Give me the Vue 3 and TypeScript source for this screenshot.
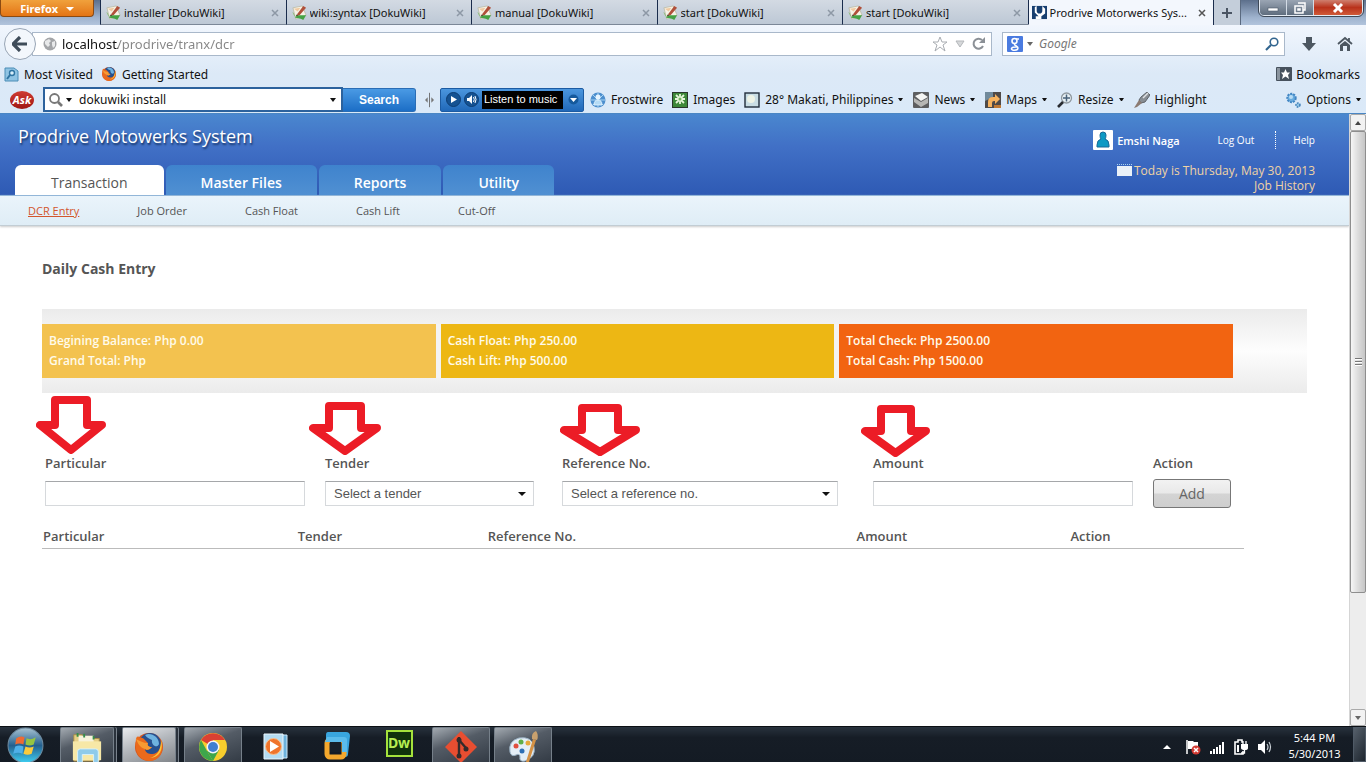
<script setup lang="ts">
import { ref } from 'vue'

interface Field {
  id: string
  label: string
  kind: 'text' | 'select' | 'button'
  hint?: string
  arrow?: { w: number; h: number; left: number; right: number; wing: number; cls: string }
}

const browserTabs = ['installer [DokuWiki]', 'wiki:syntax [DokuWiki]', 'manual [DokuWiki]', 'start [DokuWiki]', 'start [DokuWiki]']
const address = ref('localhost/prodrive/tranx/dcr')
const askQuery = ref('dokuwiki install')
const googleQuery = ref('')

const mainTabs = ['Transaction', 'Master Files', 'Reports', 'Utility']
const subTabs = ['DCR Entry', 'Job Order', 'Cash Float', 'Cash Lift', 'Cut-Off']

const cards = [
  { cls: 'light', lines: ['Begining Balance: Php 0.00', 'Grand Total: Php'] },
  { cls: 'gold', lines: ['Cash Float: Php 250.00', 'Cash Lift: Php 500.00'] },
  { cls: 'orange', lines: ['Total Check: Php 2500.00', 'Total Cash: Php 1500.00'] },
]

const fields: Field[] = [
  { id: 'particular', label: 'Particular', kind: 'text', arrow: { w: 70, h: 58, left: 19, right: 51, wing: 29, cls: 'a1' } },
  { id: 'tender', label: 'Tender', kind: 'select', hint: 'Select a tender', arrow: { w: 72, h: 53, left: 20, right: 52, wing: 26, cls: 'a2' } },
  { id: 'reference', label: 'Reference No.', kind: 'select', hint: 'Select a reference no.', arrow: { w: 80, h: 52, left: 22, right: 58, wing: 26, cls: 'a3' } },
  { id: 'amount', label: 'Amount', kind: 'text', arrow: { w: 69, h: 52, left: 20, right: 50, wing: 26, cls: 'a4' } },
  { id: 'action', label: 'Action', kind: 'button' },
]

const columns = ['Particular', 'Tender', 'Reference No.', 'Amount', 'Action']

function arrowPath(a: NonNullable<Field['arrow']>): string {
  return `M${a.left} 4H${a.right}V${a.wing}H${a.w - 4}L${a.w / 2} ${a.h - 4}L4 ${a.wing}H${a.left}Z`
}
</script>

<template>
  <div class="desktop">
    <svg class="defs" aria-hidden="true">
      <defs>
        <symbol id="doku" viewBox="0 0 16 16">
          <path d="M1 3L11 1L15 11L4 15Z" fill="#f6f3e6" stroke="#b9b7a2" stroke-width=".8" />
          <path d="M2 4L9 3L6 7Z" fill="#f0c9a0" />
          <path d="M6 9L12 1L15 3L8 11L5 12Z" fill="#b0503a" />
          <path d="M5 10L7 11L4 12Z" fill="#3b2b22" />
          <path d="M3 13C6 10 9 11 15 11L12 16C8 13 6 15 3 13Z" fill="#45a244" />
          <path d="M1 8L3 12" stroke="#8fbf7c" />
        </symbol>
        <symbol id="fox" viewBox="0 0 32 32">
          <circle cx="16" cy="16" r="14" fill="#d8561b" />
          <circle cx="17" cy="13" r="11" fill="#27508f" />
          <path d="M12 4C18 1 26 6 26 13C24 18 18 14 19 9C17 8 14 7 12 4Z" fill="#6fb3e0" />
          <path d="M3 8C1 19 5 29 16 30C27 30 32 19 28 9C29 18 24 24 18 23C14 23 12 20 12 18C15 20 17 18 19 16C15 16 14 14 15 12C12 10 11 6 7 7C5 5 4 5 3 8Z" fill="#ea6a1c" />
          <path d="M28 9C31 18 26 27 17 27C25 25 28 18 28 9Z" fill="#fbc53a" />
          <path d="M3 8C5 12 6 16 12 18C15 20 17 18 19 16C15 16 14 14 15 12C10 12 7 10 3 8Z" fill="#f79a32" />
        </symbol>
        <linearGradient id="orb" x1="0" y1="0" x2="0" y2="1">
          <stop offset="0" stop-color="#a9c3d2" />
          <stop offset=".5" stop-color="#24608f" />
          <stop offset="1" stop-color="#3ed0f3" />
        </linearGradient>
      </defs>
    </svg>

    <header class="strip">
      <button class="ff-button" type="button">Firefox <span class="tri white"></span></button>
      <nav class="btabs" aria-label="Open tabs">
        <div v-for="(t, i) in browserTabs" :key="i" class="btab">
          <svg class="fav"><use href="#doku" /></svg>
          <span class="btitle">{{ t }}</span>
          <button class="x" type="button" aria-label="Close tab"><svg viewBox="0 0 8 8"><path d="M1 1L7 7M7 1L1 7" /></svg></button>
        </div>
        <div class="btab active">
          <svg class="fav" viewBox="0 0 16 16"><rect y="1" width="16" height="14" fill="#173f70" /><path d="M3 2L5 1V6Q5 9 8 9Q11 9 11 6V1L14 4V9L10 12V15H4V12L7 12L3 8Z" fill="#fff" /></svg>
          <span class="btitle">Prodrive Motorwerks Sys...</span>
          <button class="x" type="button" aria-label="Close tab"><svg viewBox="0 0 8 8"><path d="M1 1L7 7M7 1L1 7" /></svg></button>
        </div>
        <button class="plus" type="button" aria-label="New tab"><svg viewBox="0 0 12 12"><path d="M6 1V11M1 6H11" /></svg></button>
      </nav>
      <div class="winbtns">
        <button type="button" aria-label="Minimize"><svg viewBox="0 0 14 12"><rect x="2" y="6" width="10" height="3" fill="#fff" stroke="#4a5768" stroke-width=".6" /></svg></button>
        <button type="button" aria-label="Restore"><svg viewBox="0 0 14 12"><path d="M5 1H12V8H10M2 4H10V11H2ZM5 7H7V8H5Z" fill="none" stroke="#fff" stroke-width="1.5" /></svg></button>
        <button class="close" type="button" aria-label="Close"><svg viewBox="0 0 14 12"><path d="M3 2L11 10M11 2L3 10" stroke="#fff" stroke-width="3" /></svg></button>
      </div>
    </header>

    <section class="chrome">
      <div class="navrow">
        <button class="back" type="button" aria-label="Back"><svg viewBox="0 0 16 16"><path d="M8 1L1 8L8 15M2 8H15" fill="none" stroke="#3f4c59" stroke-width="3.2" /></svg></button>
        <div class="urlbox">
          <svg class="i14" viewBox="0 0 14 14"><circle cx="7" cy="7" r="6.5" fill="#a3a5a8" /><path d="M2 4L6 2L8 4L6 6L7 8L5 10L2 7ZM9 5L12 4L12 9L10 11L9 8Z" fill="#e8e9ea" /></svg>
          <input v-model="address" class="address" aria-label="Address" />
          <svg class="i16" viewBox="0 0 16 16"><path d="M8 1L10 6L15 6L11 9L13 15L8 11L3 15L5 9L1 6L6 6Z" fill="#fff" stroke="#a9adb2" /></svg>
          <svg class="i10" viewBox="0 0 10 10"><path d="M1 2H9L5 8Z" fill="#d6d8da" stroke="#b4b7ba" /></svg>
          <svg class="i14" viewBox="0 0 14 14"><path d="M11 9A5 5 0 1 1 10 3" fill="none" stroke="#8b9096" stroke-width="2" /><path d="M7 6H13V0Z" fill="#8b9096" /></svg>
        </div>
        <div class="googlebox">
          <svg class="i16" viewBox="0 0 16 16"><rect width="16" height="16" rx="1" fill="#4a7be0" /><circle cx="7.500" cy="5" r="2.500" fill="none" stroke="#fff" stroke-width="1.600" /><path d="M9 3H12M8 8C6 9 11 10 11 12C11 15 4 15 4.500 12.500C5 10.500 9 11 10 11" fill="none" stroke="#fff" stroke-width="1.500" /></svg>
          <span class="tri gray"></span>
          <input v-model="googleQuery" class="ginput" placeholder="Google" aria-label="Search with Google" />
          <svg class="i14" viewBox="0 0 14 14"><circle cx="9" cy="5" r="3.800" fill="none" stroke="#32658f" stroke-width="1.600" /><path d="M6 8L1 13" stroke="#32658f" stroke-width="2.200" /></svg>
        </div>
        <button class="flat" type="button" aria-label="Downloads"><svg viewBox="0 0 16 16"><path d="M5 1H11V7H15L8 15L1 7H5Z" fill="#4d5761" /></svg></button>
        <button class="flat" type="button" aria-label="Home"><svg viewBox="0 0 16 16"><path d="M1 8L8 2L15 8M12 5V2" fill="none" stroke="#4d5761" stroke-width="1.800" /><path d="M3 9L8 5L13 9V15H10V10H6V15H3Z" fill="#4d5761" /></svg></button>
      </div>

      <div class="marks">
        <a href="#"><svg class="i15" viewBox="0 0 15 15"><path d="M1 1H10L14 4V14H1Z" fill="#8fc3e3" stroke="#4b8db6" /><circle cx="8" cy="6" r="2.500" fill="#d9effa" stroke="#2f74a2" stroke-width="1.400" /><path d="M6 8L3 12" stroke="#2f74a2" stroke-width="2" /></svg>Most Visited</a>
        <a href="#"><svg class="i16"><use href="#fox" /></svg>Getting Started</a>
        <a href="#" class="right"><svg class="i16" viewBox="0 0 16 16"><rect y="1" width="16" height="14" rx="1" fill="#46515d" /><rect x="1" y="2" width="3" height="12" fill="#8a949e" /><path d="M9.500 3L11 6.500H14L12 9L13 13L9.500 10.500L6 13L7 9L5 6.500H8Z" fill="#fff" /></svg>Bookmarks</a>
      </div>

      <div class="ask">
        <div class="asklogo">Ask</div>
        <div class="askbox">
          <svg class="i16" viewBox="0 0 16 16"><circle cx="6.500" cy="6.500" r="4.500" fill="#fff" stroke="#777" stroke-width="1.800" /><path d="M10 10L14 14" stroke="#777" stroke-width="2.600" /></svg>
          <span class="tri"></span>
          <input v-model="askQuery" aria-label="Ask search" />
          <span class="tri"></span>
        </div>
        <button class="search" type="button">Search</button>
        <svg class="split" viewBox="0 0 10 16"><path d="M5 0V16" stroke="#666" /><path d="M0 8L3 5V11ZM10 8L7 5V11Z" fill="#777" /></svg>
        <div class="player">
          <button type="button" aria-label="Play"><svg viewBox="0 0 15 15"><circle cx="7.500" cy="7.500" r="7" fill="#155292" stroke="#0d3d73" /><path d="M5 4V11L11 7.500Z" fill="#fff" /></svg></button>
          <button type="button" aria-label="Volume"><svg viewBox="0 0 15 15"><circle cx="7.500" cy="7.500" r="7" fill="#155292" stroke="#0d3d73" /><path d="M3 6H5L8 3V12L5 9H3Z" fill="#fff" /><path d="M9.500 5Q11 7.500 9.500 10M11 4Q13 7.500 11 11" stroke="#fff" fill="none" /></svg></button>
          <span class="screen">Listen to music</span>
          <button type="button" aria-label="Player menu"><svg viewBox="0 0 15 15"><circle cx="7.500" cy="7.500" r="5" fill="#15599c" /><path d="M4 6H11L7.500 10Z" fill="#fff" /></svg></button>
        </div>
        <div class="tools">
          <a href="#"><svg class="i16" viewBox="0 0 16 16"><circle cx="8" cy="8" r="7.500" fill="#4d8fce" /><path d="M8 1V15M1 8H15M3 3L13 13M13 3L3 13" stroke="#a8d4f2" /><circle cx="8" cy="5" r="2.500" fill="#e7f5ff" /><path d="M4 13Q4 8 8 8Q12 8 12 13Z" fill="#b5dbf5" stroke="#e7f5ff" stroke-width=".8" /></svg>Frostwire</a>
          <a href="#"><svg class="i16" viewBox="0 0 16 16"><rect x=".5" y=".5" width="15" height="15" fill="#3d8838" stroke="#29372a" /><path d="M8 2V12M3 7H13M4 3L12 11M12 3L4 11" stroke="#e6f5d9" stroke-width="1.800" /><circle cx="8" cy="7" r="1.500" fill="#74b65e" /></svg>Images</a>
          <a href="#"><svg class="i16" viewBox="0 0 16 16"><rect x="1" y="1" width="14" height="14" fill="#c9dde4" stroke="#222d3b" stroke-width="1.400" /><circle cx="7" cy="7" r="4" fill="#eef3e6" /></svg>28° Makati, Philippines<span class="tri small"></span></a>
          <a href="#"><svg class="i16" viewBox="0 0 16 16"><rect width="16" height="16" rx="1" fill="#5d5e60" /><path d="M2 4L9 1L15 5L8 9Z" fill="#f5f5f3" /><path d="M1 6L8 10L15 6V11L8 15L1 10Z" fill="#b6b6b4" /></svg>News<span class="tri small"></span></a>
          <a href="#"><svg class="i16" viewBox="0 0 16 16"><rect width="16" height="16" fill="#4f4a48" /><path d="M0 0H8V5L0 9Z" fill="#718a9b" /><path d="M3 15V10Q3 5 8 5H10V2L15 7L10 12V9H9Q7 9 7 11V15Z" fill="#f6b25e" /><path d="M9 13H16V16H9Z" fill="#c07a35" /></svg>Maps<span class="tri small"></span></a>
          <a href="#"><svg class="i16" viewBox="0 0 16 16"><circle cx="9.500" cy="6" r="5" fill="#e7f0f5" stroke="#8f989f" stroke-width="1.300" /><path d="M9.500 2.500V9.500M6 6H13" stroke="#49627a" stroke-width="1.500" /><path d="M6 10L1 15" stroke="#282b30" stroke-width="2.600" /></svg>Resize<span class="tri small"></span></a>
          <a href="#"><svg class="i16" viewBox="0 0 16 16"><path d="M7 5L13 0L16 3L11 10L7 11L5 8Z" fill="#888e94" stroke="#5f6469" /><path d="M9 6L14 1" stroke="#dfe2e4" stroke-width="1.500" /><path d="M5 8L8 11L3 15L0 16Z" fill="#8c7b72" /></svg>Highlight</a>
        </div>
        <a href="#" class="options"><svg class="i16" viewBox="0 0 16 16"><circle cx="6.500" cy="6" r="4.200" fill="#69acdf" stroke="#4386c3" stroke-width="2" stroke-dasharray="2 1" /><circle cx="6" cy="5" r="2" fill="#b9dcf4" /><circle cx="13" cy="13" r="2" fill="#8dc1e4" stroke="#3c7fb8" stroke-width="1.500" stroke-dasharray="1.500 1" /></svg>Options<span class="tri small"></span></a>
      </div>
    </section>

    <div class="viewport">
      <div class="page">
        <header class="apphead">
          <div class="headtop">
            <h1>Prodrive Motowerks System</h1>
            <div class="user">
              <div class="userrow">
                <svg class="avatar" viewBox="0 0 20 20"><rect width="20" height="20" rx="1" fill="#fff" /><path d="M7 5Q7 2 10 2Q13 2 13 5Q13 8 12 9Q16 10 16 15V17H4V15Q4 10 8 9Q7 8 7 5Z" fill="#0d9ac4" stroke="#176a98" /></svg>
                <span class="name">Emshi Naga</span>
                <a href="#" class="logout">Log Out</a>
                <a href="#" class="help">Help</a>
              </div>
              <div class="today"><svg class="cal" viewBox="0 0 16 14"><rect y="3" width="15" height="10" fill="#eaf1f8" /><path d="M0 1.500H15" stroke="#a9d3ee" stroke-dasharray="1 1" /></svg>Today is Thursday, May 30, 2013</div>
              <div class="today"><a href="#">Job History</a></div>
            </div>
          </div>
          <nav class="maintabs" aria-label="Modules">
            <a v-for="(t, i) in mainTabs" :key="t" href="#" :class="{ on: i === 0 }">{{ t }}</a>
          </nav>
        </header>
        <nav class="subnav" aria-label="Transaction">
          <a v-for="(t, i) in subTabs" :key="t" href="#" :class="{ on: i === 0 }">{{ t }}</a>
        </nav>

        <main>
          <h2>Daily Cash Entry</h2>
          <section class="summary">
            <div class="cards">
              <div v-for="c in cards" :key="c.cls" class="card" :class="c.cls">
                <div v-for="l in c.lines" :key="l">{{ l }}</div>
              </div>
            </div>
          </section>

          <form class="entry" @submit.prevent>
            <div v-for="f in fields" :key="f.id" class="field" :class="f.id">
              <label :for="f.id">{{ f.label }}</label>
              <input v-if="f.kind === 'text'" :id="f.id" type="text" />
              <div v-else-if="f.kind === 'select'" class="selectwrap">
                <select :id="f.id"><option>{{ f.hint }}</option></select>
                <span class="tri"></span>
              </div>
              <button v-else :id="f.id" type="submit">Add</button>
              <svg v-if="f.arrow" class="arrow" :class="f.arrow.cls" :width="f.arrow.w" :height="f.arrow.h" aria-hidden="true"><path :d="arrowPath(f.arrow)" /></svg>
            </div>
          </form>

          <table class="entries">
            <thead><tr><th v-for="c in columns" :key="c" :class="c.slice(0, 3).toLowerCase()" scope="col">{{ c }}</th></tr></thead>
          </table>
        </main>
      </div>
      <div class="scroll" aria-hidden="true">
        <div class="sbtn"><span class="tri up"></span></div>
        <div class="track"><div class="thumb"><i></i><i></i><i></i></div></div>
        <div class="sbtn"><span class="tri gray"></span></div>
      </div>
    </div>

    <footer class="taskbar">
      <button class="start" type="button" aria-label="Start"><svg viewBox="0 0 36 36"><circle cx="18" cy="18" r="17" fill="url(#orb)" stroke="#6e8ba0" /><path d="M9 11Q13 8 17 10L16 17Q12 15 8 17Z" fill="#ee6a33" /><path d="M19 11Q23 13 28 10L26 17Q22 19 18 17Z" fill="#96c542" /><path d="M8 19Q12 17 16 19L15 26Q11 24 6 26Z" fill="#4fb0e8" /><path d="M18 19Q22 21 26 19L24 26Q20 28 16 26Z" fill="#fbca3c" /></svg></button>
      <button class="task open stack" type="button" aria-label="Explorer"><svg viewBox="0 0 34 34"><path d="M3 4H12V8H30V32H3Z" fill="#e6cf86" stroke="#a98c43" /><path d="M8 5H24V12H8Z" fill="#f7f3dc" /><path d="M2 11H32V31H2Z" fill="#f7e8a7" /><path d="M7 2V6M14 3V7M24 5V9" stroke="#358d49" stroke-width="2" /><path d="M7 34V22Q7 19 10 19H26Q29 19 29 22V34H24V25H12V34Z" fill="#8fcbea" stroke="#d8f1fb" /></svg></button>
      <button class="task open current stack" type="button" aria-label="Firefox"><svg><use href="#fox" /></svg></button>
      <button class="task open" type="button" aria-label="Chrome"><svg viewBox="0 0 32 32"><circle cx="16" cy="16" r="14" fill="#f7cd2d" /><path d="M16 16L4 9A14 14 0 0 1 28 9H16Z" fill="#db4033" /><path d="M4 9L10 20L16 30A14 14 0 0 1 4 9Z" fill="#3ea64b" /><path d="M10 20L16 30L22 19Z" fill="#3ea64b" /><circle cx="16" cy="16" r="6.500" fill="#f4f5f5" /><circle cx="16" cy="16" r="5" fill="#3f7fd1" /></svg></button>
      <button class="task" type="button" aria-label="Media Player"><svg viewBox="0 0 32 32"><path d="M8 5H28V28H8Z" fill="#6eb2dc" stroke="#d1eafa" /><path d="M5 4H24V29H5Z" fill="#b5dcf2" stroke="#eaf6fd" /><circle cx="14.500" cy="16.500" r="8" fill="#f0742b" stroke="#fac28e" /><path d="M11 11V22L20 16.500Z" fill="#fff" /></svg></button>
      <button class="task" type="button" aria-label="VMware"><svg viewBox="0 0 32 32"><path d="M7 2H25Q29 2 29 6L27 24Q27 27 24 27H21V9H5V5Q5 2 7 2Z" fill="#39a6df" /><rect x="6" y="10" width="17" height="17" rx="3" fill="none" stroke="#f4a82d" stroke-width="5" /><path d="M6 7H23Q26 7 26 10V22H21V12H4Z" fill="#5bbcec" /><rect x="9" y="12" width="11" height="10" fill="#17202a" /></svg></button>
      <button class="task" type="button" aria-label="Dreamweaver"><span class="dw">Dw</span></button>
      <button class="task open" type="button" aria-label="Git"><svg viewBox="0 0 32 32"><path d="M16 0L32 16L16 32L0 16Z" fill="#e84e31" /><path d="M14 6V25M14 9L21 17" stroke="#352b2b" stroke-width="2.400" /><circle cx="14" cy="9" r="2.500" fill="#352b2b" /><circle cx="14" cy="25" r="2.500" fill="#352b2b" /><circle cx="21" cy="18" r="2.500" fill="#352b2b" /></svg></button>
      <button class="task open" type="button" aria-label="Paint"><svg viewBox="0 0 32 32"><path d="M3 21Q1 10 12 7Q25 5 27 16Q29 26 18 30Q12 31 13 26Q13 22 9 24Q4 26 3 21Z" fill="#e4eef6" stroke="#9cb4c7" /><circle cx="9" cy="15" r="2.500" fill="#e1503f" /><circle cx="14" cy="11" r="2.500" fill="#5fae47" /><circle cx="21" cy="12" r="2.500" fill="#e7a83a" /><circle cx="15" cy="20" r="2.500" fill="#2e6fb4" /><path d="M19 31L26 8L29 9L22 31Z" fill="#d49246" /><path d="M25 8Q24 2 29 0Q32 4 30 9Z" fill="#c9a16e" /></svg></button>
      <div class="tray">
        <span class="tri up white"></span>
        <svg class="i16" viewBox="0 0 16 16"><path d="M2 1V15" stroke="#fff" stroke-width="1.500" /><path d="M3 2H8L9 3H13V10H3Z" fill="#fff" /><circle cx="11" cy="11" r="4.500" fill="#d33b33" /><path d="M9 9L13 13M13 9L9 13" stroke="#fff" stroke-width="1.500" /></svg>
        <svg class="i16" viewBox="0 0 16 16"><path d="M2 15V12M5 15V10M8 15V8M11 15V6M14 15V3" stroke="#fff" stroke-width="2" /></svg>
        <svg class="i16" viewBox="0 0 16 16"><path d="M3 3H5V1H9V3H10M3 3H2V15H10V12" fill="none" stroke="#fff" stroke-width="1.600" /><path d="M8 5H15V9Q15 11 12 11Q8 11 8 9Z" fill="#fff" /><path d="M10 2V5M13 2V5M11.500 11V14H8" stroke="#fff" stroke-width="1.300" fill="none" /><path d="M4 6H6V13H4Z" fill="#fff" /></svg>
        <svg class="i16" viewBox="0 0 16 16"><path d="M1 5H4L8 1V15L4 11H1Z" fill="#fff" /><path d="M10 5Q12 8 10 11M12 3Q15 8 12 13" fill="none" stroke="#c9d0d6" stroke-width="1.200" /></svg>
      </div>
      <time class="clock"><span>5:44 PM</span><span>5/30/2013</span></time>
      <button class="peek" type="button" aria-label="Show desktop"></button>
    </footer>
  </div>
</template>

<style>
html, body { margin: 0; }
</style>

<style scoped>
.desktop {
  display: flex;
  flex-direction: column;
  height: 100vh;
  overflow: hidden;
  font-family: "Noto Sans", "Open Sans", sans-serif;
  font-size: 12px;
  color: #111;
  background: #fff;
}
.desktop * { box-sizing: border-box; }
.defs { position: absolute; width: 0; height: 0; }
a { color: inherit; text-decoration: none; }
button { font: inherit; color: inherit; padding: 0; border: 0; background: none; }
input { font: inherit; color: inherit; border: 0; padding: 0; margin: 0; background: none; outline: 0; min-width: 0; }
svg { display: block; flex: none; }
.i10 { width: 10px; height: 10px; }
.i14 { width: 14px; height: 14px; }
.i15 { width: 15px; height: 15px; }
.i16 { width: 16px; height: 16px; }
.tri { flex: none; display: inline-block; width: 0; height: 0; border: 3px solid transparent; border-top: 4px solid #111; border-bottom: 0; }
.tri.small { border-width: 3px 2px 0; width: 5px; }
.tri.white { border-top-color: #fff; }
.tri.gray { border-top-color: #666; }
.tri.up { border-top: 0; border-bottom: 4px solid #444; }
.tri.up.white { border-bottom-color: #fff; }

/* tab strip */
.strip { display: flex; flex: none; height: 25px; background: linear-gradient(#5c6f8b, #9fb3ce 70%, #b2c4dc); }
.ff-button {
  width: 94px; height: 17px; margin-right: 6px; border: 1px solid #8b4a12; border-top: 0; border-radius: 0 0 4px 4px;
  background: linear-gradient(#f0a13c, #e37415); color: #fff; font-size: 11px; font-weight: 700; line-height: 15px;
}
.ff-button .tri { border-width: 4px 4px 0; margin: 0 0 2px 5px; }
.btabs { display: flex; flex: 1; min-width: 0; }
.btab {
  display: flex; align-items: center; flex: 0 1 186px; min-width: 0; padding: 1px 7px 0 5px; font-size: 11px;
  background: linear-gradient(#d3dae3, #bdc8d5); border-left: 1px solid #1a2c4c; border-bottom: 1px solid #7b8797;
}
.btab.active { background: #f3f7fd; border-bottom-color: #f3f7fd; padding-left: 3px; }
.fav { width: 15px; height: 15px; margin-right: 3px; }
.btitle { flex: 1; white-space: nowrap; overflow: hidden; }
.x svg { width: 8px; height: 8px; }
.x path { stroke: #8d98a5; stroke-width: 1.500; }
.active .x path { stroke: #555; }
.plus { display: grid; flex: none; place-items: center; width: 28px; background: #c4ceda; border-left: 1px solid #1a2c4c; border-right: 1px solid #5a6a80; }
.plus svg { width: 12px; height: 12px; }
.plus path { stroke: #4a5563; stroke-width: 2; }
.winbtns { display: flex; width: 104px; height: 16px; margin: 0 3px 0 18px; border: 1px solid #e4ebf3; border-top: 0; border-radius: 0 0 5px 5px; overflow: hidden; outline: 1px solid #3f4a58; }
.winbtns button { display: grid; place-items: center; flex: 0 0 27px; background: linear-gradient(#9aa5b3, #5f6d7e); border-right: 1px solid #d4dce6; }
.winbtns .close { flex: 1; border: 0; background: linear-gradient(#cf7f6e, #b9321b 50%, #d05a38); }
.winbtns svg { width: 14px; height: 12px; }

/* browser toolbars */
.chrome { flex: none; background: linear-gradient(#f1f6fd, #dce9f7 55%, #dae9f8); border-bottom: 1px solid #4a86c4; }
.navrow { display: flex; align-items: center; height: 37px; padding: 0 13px 0 4px; }
.back { display: grid; place-items: center; width: 32px; height: 32px; border-radius: 50%; background: #f3f7fc; border: 1px solid #98a5b5; z-index: 1; }
.back svg { width: 16px; height: 16px; }
.urlbox, .googlebox { display: flex; align-items: center; height: 24px; background: #fff; border: 1px solid #a9b8ca; }
.urlbox { flex: 1; margin-left: -4px; padding: 0 5px 0 10px; gap: 7px; }
.address { flex: 1; font-size: 13px; line-height: 20px; margin-left: -2px; color: transparent; background: linear-gradient(90deg, #111 56px, #858585 56px); -webkit-background-clip: text; background-clip: text; }
.googlebox { flex: 0 0 283px; margin: 0 16px 0 10px; padding: 0 5px 0 4px; gap: 4px; }
.ginput { flex: 1; font-style: italic; margin-left: 2px; }
.ginput::placeholder { color: #777; opacity: 1; }
.flat svg { width: 16px; height: 16px; }
.flat + .flat { margin-left: 20px; }
.marks { display: flex; align-items: center; gap: 8px; height: 24px; padding: 0 6px 0 4px; }
.marks a, .tools a, .options { display: flex; align-items: center; gap: 5px; white-space: nowrap; }
.marks .right { margin-left: auto; gap: 4px; }
.ask { display: flex; align-items: center; height: 27px; padding: 0 5px 0 10px; }
.asklogo { width: 24px; height: 18px; border-radius: 50%; background: linear-gradient(#cf3b32, #a01713); color: #fff; font-weight: 700; font-style: italic; font-size: 11px; line-height: 17px; text-align: center; }
.askbox { display: flex; align-items: center; flex: 0 0 300px; height: 25px; margin-left: 9px; padding: 0 5px 0 3px; border: 2px solid #2c629d; background: #fff; }
.askbox input { flex: 1; margin-left: 7px; }
.askbox svg { margin-right: 2px; }
.search { width: 73px; height: 24px; background: linear-gradient(#4a9ae4, #1c6ec6); border: 1px solid #2a6db5; border-left: 0; border-radius: 0 3px 3px 0; color: #fff; font: 700 12px "Liberation Sans", sans-serif; }
.split { width: 9px; height: 16px; margin: 0 6px 0 9px; }
.player { display: flex; align-items: center; gap: 3px; height: 24px; padding: 0 2px 0 5px; border-radius: 2px; border: 1px solid #1c5ba2; background: linear-gradient(#4b96de, #2068b8); }
.player svg { width: 15px; height: 15px; }
.screen { width: 81px; height: 18px; padding-left: 2px; line-height: 17px; background: #000; color: #fff; font-family: "Liberation Sans", sans-serif; font-size: 11px; white-space: nowrap; }
.tools { display: flex; gap: 9px; margin-left: 6px; }
.tools a:nth-child(n + 3) { margin-right: 1px; }
.options { margin-left: auto; }

/* web page */
.viewport { display: flex; flex: 1; min-height: 0; }
.page { flex: 1; min-width: 0; overflow: hidden; color: #555; font-family: "Open Sans", "Noto Sans", sans-serif; }
.apphead { display: flex; flex-direction: column; justify-content: space-between; height: 81px; background: linear-gradient(#4a87cf, #4170c6 40%, #2e5ab4); color: #fff; }
.headtop { display: flex; justify-content: space-between; height: 0; padding: 0 34px 0 18px; }
h1 { margin: 9px 0 0; font-size: 18px; line-height: 26px; font-weight: 500; text-shadow: 1px 2px 2px #173568; white-space: nowrap; }
.user { padding-top: 15px; }
.userrow { display: flex; align-items: center; justify-content: flex-end; height: 22px; font-size: 10px; font-weight: 500; }
.avatar { width: 20px; height: 20px; margin-right: 4px; }
.name { font-size: 11px; font-weight: 600; margin-right: 38px; }
.logout { padding-right: 21px; line-height: 18px; border-right: 1px dotted #fff; margin-right: 17px; }
.today { display: flex; justify-content: flex-end; font-size: 12px; line-height: 15px; color: #f0d3a4; }
.user .userrow + .today { margin-top: 12px; }
.cal { width: 16px; height: 14px; margin-right: 1px; }
.maintabs { display: flex; gap: 2px; padding-left: 15px; }
.maintabs a { padding: 6px 35px 0; height: 30px; line-height: 24px; font-size: 14px; font-weight: 600; border-radius: 6px 6px 0 0; background: linear-gradient(#3f83cd, #5090d2); }
.maintabs a.on { padding: 6px 36px 0; background: #fff; color: #555; font-weight: 500; }
.subnav { display: flex; align-items: center; gap: 58px; height: 31px; padding-left: 28px; font-size: 11px; font-weight: 500; background: linear-gradient(#eaf4fb, #dfedf6); border-top: 1px solid #92b6d8; border-bottom: 1px solid #c2cdd4; box-shadow: 0 1px 2px #ccc; }
.subnav .on { color: #d3562d; text-decoration: underline; }
main { padding: 32px 42px 0; }
h2 { margin: 0; font-size: 14px; line-height: 22px; font-weight: 700; }
.summary { margin-top: 29px; padding: 15px 0; background: linear-gradient(#ebebeb, #fdfdfd 50%, #ebebeb); }
.cards { display: flex; gap: 5px; width: 94.15%; background: #f3f3f3; }
.card { flex: 1; padding: 7px; line-height: 20px; font-weight: 600; color: #fffbea; }
.light { background: #f3c24f; }
.gold { background: #edb714; }
.orange { background: #f26411; }
.entry { display: grid; grid-template-columns: 280fr 237fr 311fr 280fr 78fr; width: 93.75%; margin: 60px 0 0 3px; }
.field { position: relative; }
.field label { display: block; height: 28px; line-height: 20px; font-size: 13px; font-weight: 600; }
.particular, .amount { padding-right: 20px; }
.tender { padding-right: 28px; }
.reference { padding-right: 35px; }
.field input, .field select { display: block; width: 100%; height: 25px; border: 1px solid #d6d9dc; border-top-color: #a5a7aa; background: #fff; padding: 0 8px; font: 13px "Liberation Sans", sans-serif; color: #555; }
.field select { appearance: none; border-radius: 0; }
.selectwrap { position: relative; }
.selectwrap .tri { position: absolute; right: 8px; top: 11px; border-width: 4px 4px 0; }
.field.action label { height: 26px; }
.field button { display: block; width: 100%; height: 29px; border: 1px solid #777; border-radius: 3px; background: linear-gradient(#f2f2f2, #e9e9e9 48%, #d4d4d4 52%, #cecece); font-size: 14px; color: #666; }
.arrow { position: absolute; }
.arrow path { fill: #fff; stroke: #ec1c26; stroke-width: 8; stroke-linejoin: round; }
.a1 { left: -9px; top: -57px; }
.a2 { left: -16px; top: -51px; }
.a3 { left: -2px; top: -49px; }
.a4 { left: -12px; top: -48px; }
.entries { width: 95%; margin-top: 16px; table-layout: fixed; border-collapse: collapse; border-bottom: 1px solid #bbb; }
.entries th { padding: 0 1px; height: 24px; text-align: left; font-size: 13px; font-weight: 600; }
.par { width: 21.2%; }
.ten { width: 15.8%; }
.ref { width: 30.7%; }
.amo { width: 17.8%; }

.scroll { display: flex; flex-direction: column; width: 17px; border-left: 1px solid #d5d5d5; background: #ededed; }
.sbtn { display: grid; place-items: center; height: 17px; border: 1px solid #aaa; border-radius: 2px; background: #f2f2f2; }
.track { flex: 1; }
.thumb { display: flex; flex-direction: column; align-items: center; justify-content: center; gap: 1px; height: 80%; border: 1px solid #8e8e8e; border-radius: 2px; background: linear-gradient(90deg, #f6f6f6, #dcdcdc 50%, #c6c6c6); }
.thumb i { width: 7px; height: 2px; background: #777; border-bottom: 1px solid #fff; }

/* taskbar */
.taskbar { display: flex; flex: none; height: 36px; background: linear-gradient(#28323d, #161d26 30%, #141b24); border-top: 1px solid #0b0f14; overflow: hidden; }
.start { width: 50px; height: 36px; margin-right: 10px; padding-left: 7px; }
.start svg { width: 37px; height: 37px; }
.task { display: grid; place-items: center; align-content: start; width: 58px; height: 36px; margin-right: 4px; padding-top: 3px; }
.task svg { width: 32px; height: 32px; }
.task.open { border: 1px solid #76808a; border-bottom: 0; border-radius: 2px 2px 0 0; background: linear-gradient(160deg, #a3aab1, #545c66 40%, #323a44); }
.task.current { background: linear-gradient(160deg, #e9ebee, #b4b8bd 45%, #7f8388); }
.task.stack { width: 54px; margin-right: 8px; box-shadow: 2px 0 0 #2a323c, 3px 0 0 #79828c; }
.dw { width: 27px; height: 27px; border: 2px solid #a5e23c; background: #11320c; color: #b6ee52; font-weight: 700; font-size: 14px; line-height: 22px; }
.tray { display: flex; align-items: center; gap: 8px; margin-left: auto; padding-top: 4px; }
.tray .up { margin-right: 6px; border-left-width: 4px; border-right-width: 4px; }
.clock { display: flex; flex-direction: column; align-items: center; width: 80px; padding: 3px 0 0 3px; color: #fff; font-size: 11px; line-height: 16px; }
.peek { width: 13px; border: 1px solid #4f5a66; background: linear-gradient(120deg, #56606b, #1d252e); }
</style>
